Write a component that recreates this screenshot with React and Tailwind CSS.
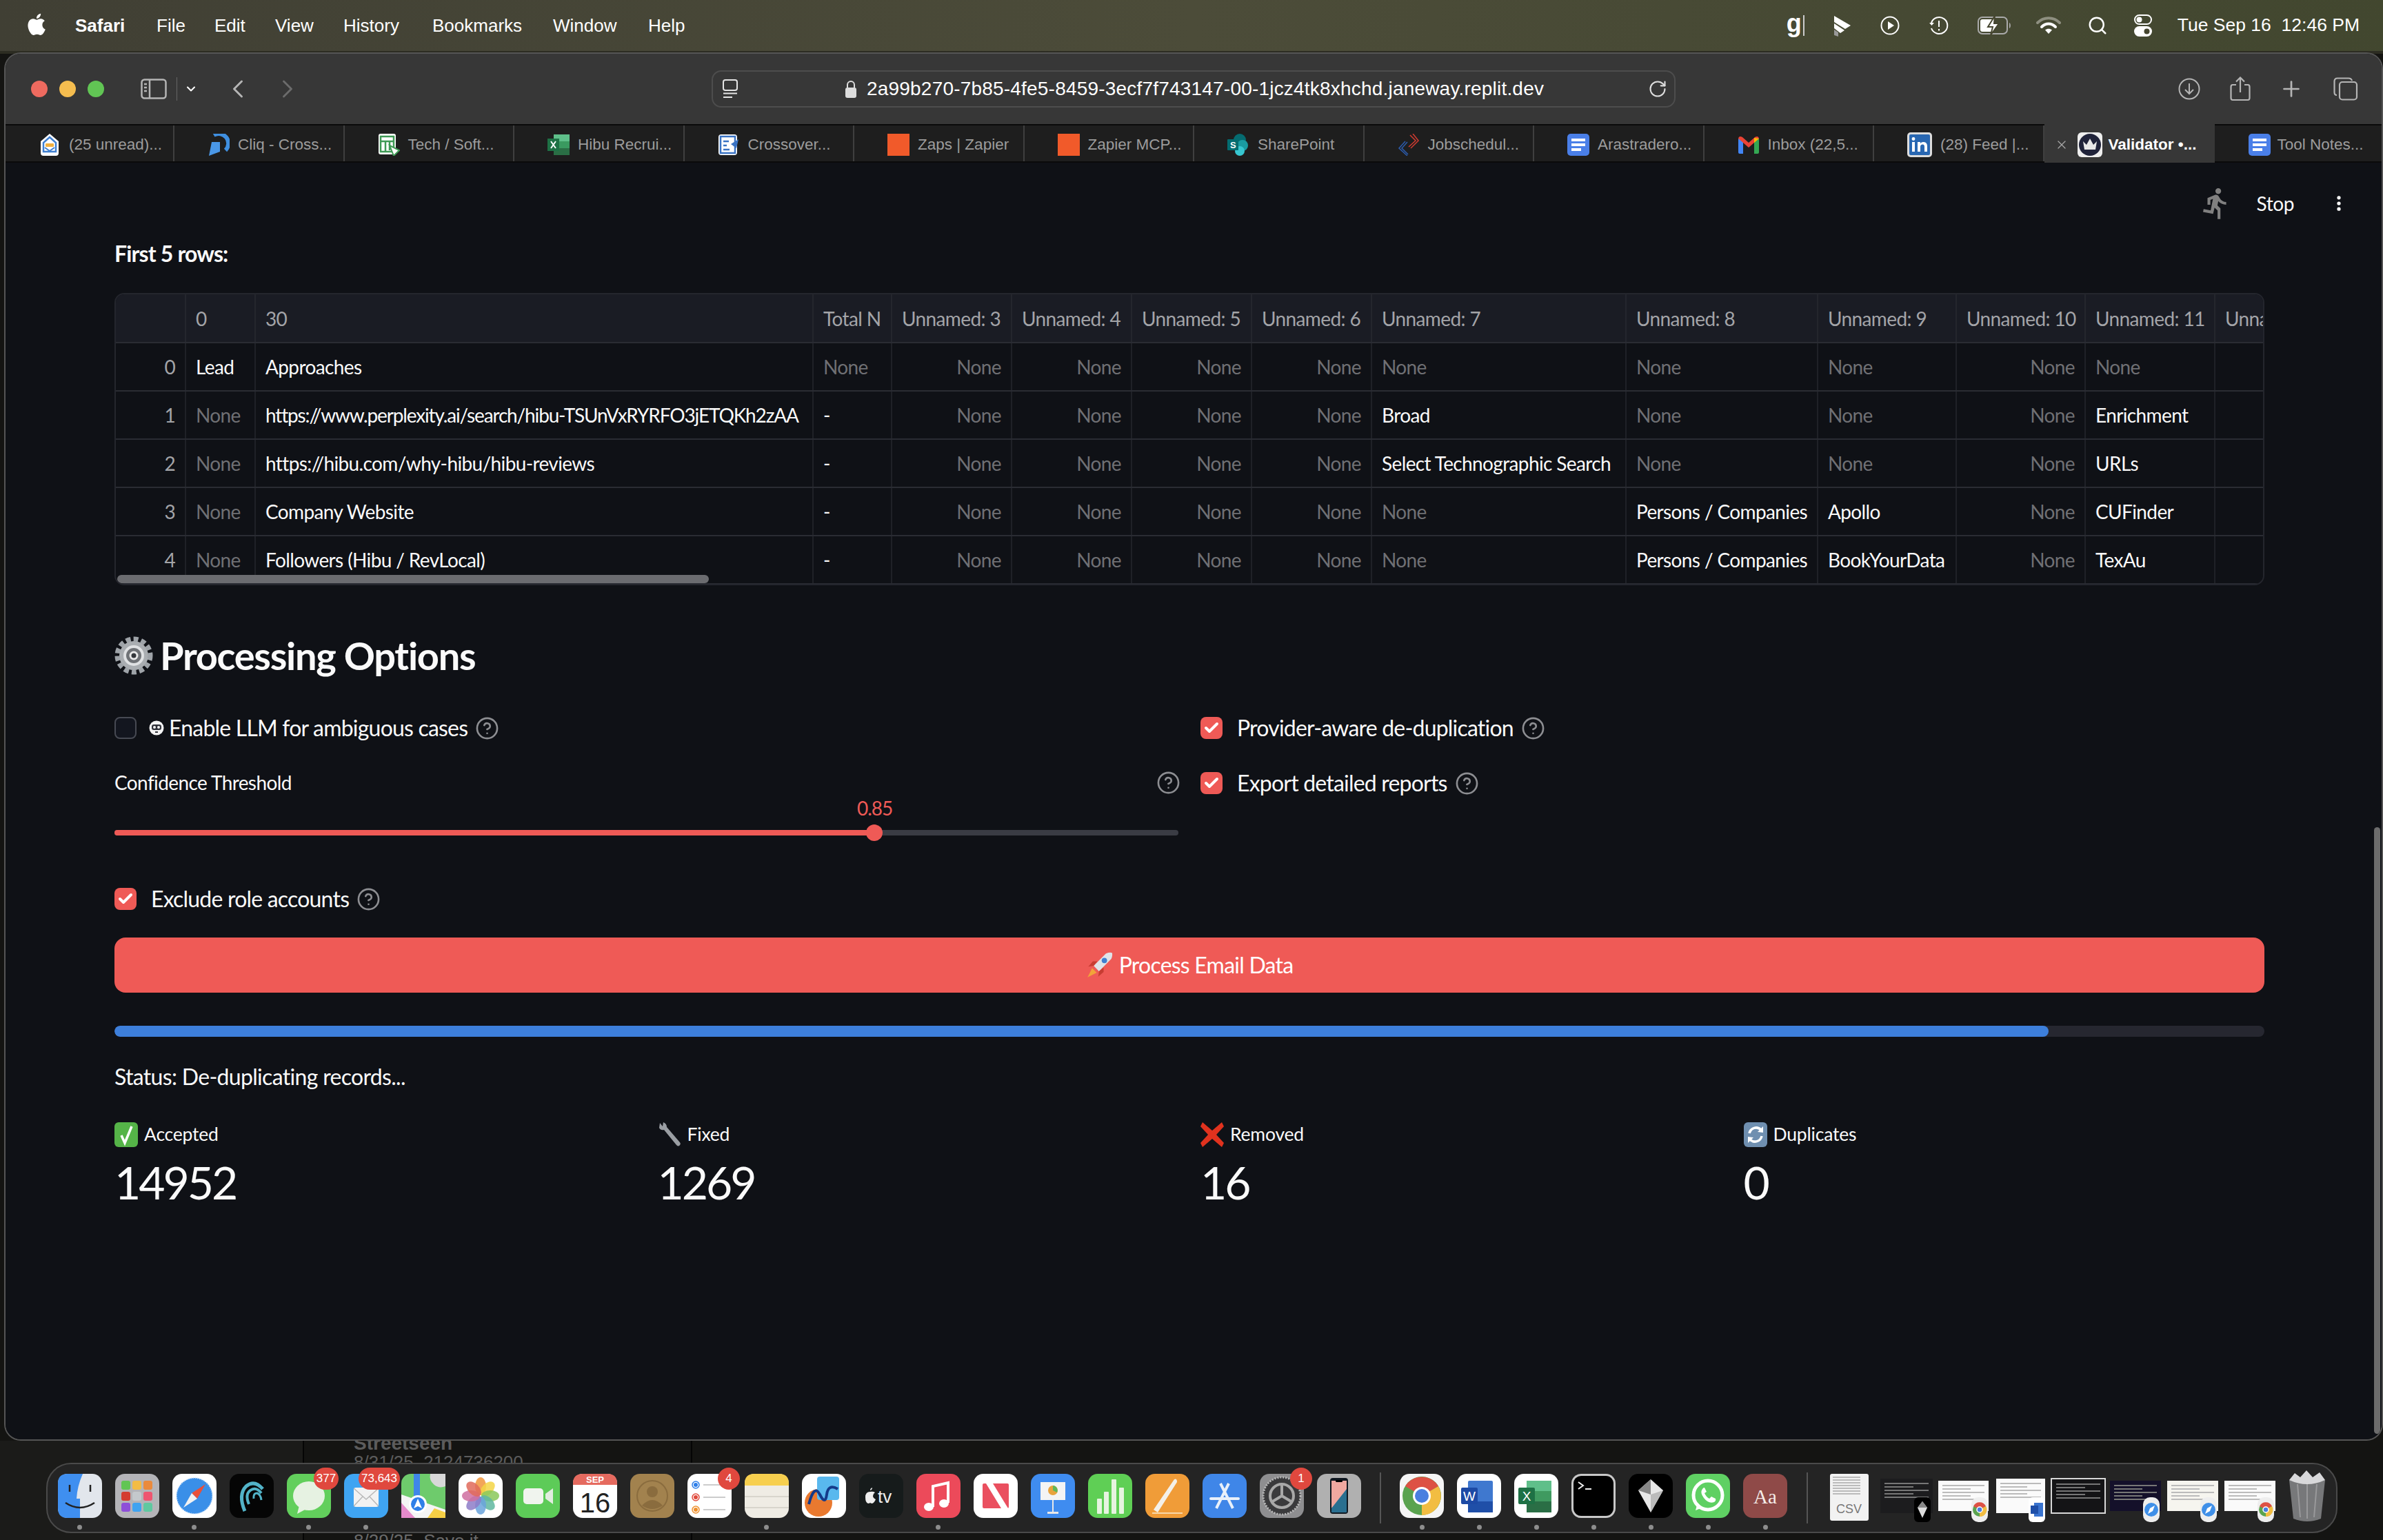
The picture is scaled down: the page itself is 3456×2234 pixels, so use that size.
import React from "react";
import { ChevronDown, ChevronLeft, ChevronRight, CircleHelp, Check, EllipsisVertical, Plus, Search, RotateCw, X } from "lucide-react";
import { MdDirectionsRun } from "react-icons/md";

const ui = "font-['Liberation_Sans',sans-serif]";
const app = "font-['Lato',sans-serif]";

/* ---------- menu bar ---------- */
const menuItems = [
  ["Safari", "w-[118px] font-bold"],
  ["File", "w-[84px]"],
  ["Edit", "w-[88px]"],
  ["View", "w-[99px]"],
  ["History", "w-[129px]"],
  ["Bookmarks", "w-[175px]"],
  ["Window", "w-[138px]"],
  ["Help", "w-[60px]"],
];

function AppleLogo({ className }) {
  return (
    <svg viewBox="0 0 24 24" fill="currentColor" className={className}>
      <path d="M17.6 12.8c0-2.6 2.1-3.8 2.2-3.9-1.2-1.8-3.1-2-3.7-2-1.6-.2-3.1.9-3.9.9s-2.1-.9-3.4-.9c-1.7 0-3.4 1-4.3 2.6-1.8 3.2-.5 7.9 1.3 10.5.9 1.3 1.9 2.7 3.3 2.6 1.3-.1 1.8-.8 3.4-.8s2 .8 3.4.8 2.3-1.3 3.2-2.6c1-1.5 1.4-2.9 1.4-3-.1 0-2.9-1.1-2.9-4.2zM15 5.1c.7-.9 1.2-2.1 1.1-3.3-1 0-2.3.7-3 1.5-.7.8-1.3 2-1.1 3.2 1.1.1 2.3-.6 3-1.4z" />
    </svg>
  );
}

function MenuBar() {
  return (
    <div className={`${ui} flex items-center h-[74px] bg-linear-to-r from-[#403f34] via-[#4c4c39] to-[#42472f] text-white text-[26px] shrink-0`}>
      <AppleLogo className="w-[36px] h-[36px] ml-[35px] mr-[38px] -mt-[4px]" />
      {menuItems.map(([label, cls]) => (
        <span key={label} className={cls}>{label}</span>
      ))}
      <div className="ml-auto flex items-center text-white">
        <span className="font-bold text-[36px] leading-none -mt-[6px]">g</span>
        <span className="w-[2px] h-[30px] bg-[#ccc] ml-[2px]" />
        <svg viewBox="0 0 28 32" className="w-[28px] h-[32px] ml-[41px]">
          <path d="M2 2 L26 16 L18 21 L2 11Z" fill="#fff" />
          <path d="M2 13 L17 23 L11 27 L2 20Z" fill="#fff" />
          <path d="M2 22 L8 26 L8 32 L2 30Z" fill="#999" />
        </svg>
        <svg viewBox="0 0 28 28" className="w-[28px] h-[28px] ml-[41px]">
          <circle cx="14" cy="14" r="12.5" fill="none" stroke="#fff" strokeWidth="2" />
          <path d="M11 8 L20 14 L11 20Z" fill="#fff" />
        </svg>
        <svg viewBox="0 0 28 28" className="w-[28px] h-[28px] ml-[43px]" fill="none" stroke="#fff" strokeWidth="2">
          <path d="M3 10 A12 12 0 1 1 3 18" />
          <path d="M0 10 L3.5 14 L7 10" fill="#fff" stroke="none" />
          <path d="M14 7 V16 M14 19 V21.5" />
        </svg>
        <svg viewBox="0 0 50 30" className="w-[50px] h-[30px] ml-[42px]" fill="none">
          <rect x="1" y="3" width="42" height="24" rx="6" stroke="#aaa" strokeWidth="2" />
          <rect x="4" y="6" width="20" height="18" rx="3" fill="#fff" />
          <path d="M46 11 v8 c2.5-1 2.5-7 0-8z" fill="#aaa" />
          <path d="M25 1 L15 17 H22 L19 29 L31 12 H24Z" fill="#fff" stroke="#45452f" strokeWidth="2" />
        </svg>
        <svg viewBox="0 0 36 28" className="w-[36px] h-[28px] ml-[35px]" fill="none" strokeLinecap="round">
          <path d="M2 10 C11 1 25 1 34 10" stroke="#8e8f80" strokeWidth="4" />
          <path d="M8 16 C14 10 22 10 28 16" stroke="#fff" strokeWidth="4" />
          <path d="M18 26 L13 20.5 C16 18 20 18 23 20.5Z" fill="#fff" />
        </svg>
        <Search className="w-[30px] h-[30px] ml-[38px]" strokeWidth={2} />
        <svg viewBox="0 0 26 32" className="w-[26px] h-[32px] ml-[38px]">
          <rect x="1" y="1" width="24" height="13" rx="6.5" fill="none" stroke="#fff" strokeWidth="2" />
          <circle cx="7.5" cy="7.5" r="4" fill="#fff" />
          <rect x="0" y="17" width="26" height="15" rx="7.5" fill="#fff" />
          <circle cx="18.5" cy="24.5" r="4" fill="#45452f" />
        </svg>
        <span className="ml-[37px] mr-[34px] text-[26.5px] whitespace-nowrap">Tue Sep 16&nbsp;&nbsp;12:46 PM</span>
      </div>
    </div>
  );
}

/* ---------- favicons ---------- */
const fav = "w-[32px] h-[32px] shrink-0";
const favicons = {
  outlook: (
    <svg viewBox="0 0 32 32" className={fav}>
      <path d="M16 0 L29 11 V28 Q29 32 25 32 H7 Q3 32 3 28 V11Z" fill="#fff" />
      <path d="M16 5 L25 13 V26 H7 V13Z" fill="none" stroke="#3f7fd0" strokeWidth="2.5" />
      <rect x="10" y="14" width="12" height="5" rx="1" fill="#f0b040" />
      <path d="M9 20 L16 25 L23 20" fill="none" stroke="#3f7fd0" strokeWidth="2" />
    </svg>
  ),
  cliq: (
    <svg viewBox="0 0 32 32" className={fav}>
      <path d="M9 2 A14 14 0 0 1 26 24" fill="none" stroke="#3f8fe0" strokeWidth="6" />
      <path d="M6 12 H18 V26 L2 32Z" fill="#4a97e6" />
    </svg>
  ),
  sheet: (
    <svg viewBox="0 0 32 32" className={fav}>
      <rect x="1" y="0" width="25" height="30" rx="3" fill="#fff" />
      <path d="M4 4 H23 V26 H4Z M4 11 H23 M11 11 V26 M17 11 V24" fill="none" stroke="#3f9a55" strokeWidth="2.5" />
      <path d="M17 17 L31 24 L23 32Z" fill="#fff" stroke="#3f9a55" strokeWidth="2" />
    </svg>
  ),
  excel: (
    <svg viewBox="0 0 32 32" className={fav}>
      <rect x="9" y="1" width="23" height="10" fill="#5fbf8a" />
      <rect x="9" y="11" width="23" height="10" fill="#3a9a60" />
      <rect x="9" y="21" width="23" height="10" fill="#2a6e45" />
      <rect x="0" y="7" width="17" height="18" fill="#1e7145" />
      <path d="M5 11 L12 21 M12 11 L5 21" stroke="#fff" strokeWidth="2" />
    </svg>
  ),
  form: (
    <svg viewBox="0 0 32 32" className={fav}>
      <rect x="1" y="1" width="27" height="30" rx="4" fill="#fff" />
      <rect x="4" y="4" width="21" height="24" fill="none" stroke="#3a73c4" strokeWidth="2.5" />
      <path d="M8 11 H16 M8 17 H13 M8 23 H17" stroke="#3a73c4" strokeWidth="2.5" />
      <path d="M30 8 L19 15 L27 21Z" fill="#3a73c4" />
    </svg>
  ),
  zapier: <div className={`${fav} bg-[#f15a2a]`} />,
  sharepoint: (
    <svg viewBox="0 0 32 32" className={fav}>
      <circle cx="18" cy="9" r="9" fill="#056b70" />
      <circle cx="22" cy="17" r="8" fill="#1a9ba1" />
      <circle cx="18" cy="25" r="7" fill="#37c6d0" />
      <rect x="0" y="8" width="16" height="16" rx="1" fill="#036c70" />
      <text x="4" y="21" fontSize="13" fontWeight="700" fill="#fff" fontFamily="Liberation Sans">S</text>
    </svg>
  ),
  job: (
    <svg viewBox="0 0 32 32" className={fav} fill="none" strokeWidth="1.6">
      <path d="M18 2 L26 10 L16 19 M22 0 L30 10 L19 21" stroke="#c93a30" />
      <path d="M14 12 L6 21 L15 30 M11 11 L2 21 L14 32" stroke="#2c5aa8" />
    </svg>
  ),
  docs: (
    <svg viewBox="0 0 32 32" className={fav}>
      <rect x="0" y="0" width="32" height="32" rx="5" fill="#4a7fe8" />
      <rect x="6" y="7" width="20" height="4" fill="#fff" />
      <rect x="6" y="14" width="20" height="4" fill="#fff" />
      <rect x="6" y="21" width="14" height="4" fill="#fff" />
    </svg>
  ),
  gmail: (
    <svg viewBox="0 0 32 32" className={fav}>
      <path d="M1 7 L8 11 V29 H3 Q1 29 1 27Z" fill="#4285f4" />
      <path d="M31 7 L24 11 V29 H29 Q31 29 31 27Z" fill="#34a853" />
      <path d="M1 7 Q2 2 7 5 L16 13 L25 5 Q30 2 31 7 L24 13 L16 20 L8 13Z" fill="#ea4335" />
      <path d="M24 6 L31 7 L24 13Z" fill="#fbbc04" />
    </svg>
  ),
  linkedin: (
    <svg viewBox="0 0 36 36" className="w-[36px] h-[36px] shrink-0">
      <rect x="0" y="0" width="36" height="36" rx="5" fill="#ddd" />
      <rect x="3" y="3" width="30" height="30" rx="2" fill="#2867b2" />
      <rect x="7" y="14" width="4" height="14" fill="#fff" />
      <circle cx="9" cy="9.5" r="2.4" fill="#fff" />
      <path d="M15 14 H19 V16 Q21 13.5 24 14 Q29 14.5 29 20 V28 H25 V21 Q25 17.5 22.5 17.5 Q19 17.5 19 21 V28 H15Z" fill="#fff" />
    </svg>
  ),
  crown: (
    <svg viewBox="0 0 36 36" className="w-[36px] h-[36px] shrink-0">
      <rect x="0" y="0" width="36" height="36" rx="6" fill="#eee" />
      <circle cx="18" cy="18" r="16" fill="#20233a" />
      <path d="M8 13 L13 18 L18 9 L23 18 L28 13 L26 25 H10Z" fill="#e8e8e8" />
    </svg>
  ),
};

const tabs = [
  ["outlook", "(25 unread)..."],
  ["cliq", "Cliq - Cross..."],
  ["sheet", "Tech / Soft..."],
  ["excel", "Hibu Recrui..."],
  ["form", "Crossover..."],
  ["zapier", "Zaps | Zapier"],
  ["zapier", "Zapier MCP..."],
  ["sharepoint", "SharePoint"],
  ["job", "Jobschedul..."],
  ["docs", "Arastradero..."],
  ["gmail", "Inbox (22,5..."],
  ["linkedin", "(28) Feed |..."],
];

function TabBar() {
  return (
    <div className={`${ui} flex h-[56px] bg-[#1e1e1e] border-y-2 border-[#0a0a0a] text-[22.5px] text-[#9c9c9c] shrink-0`}>
      {tabs.map(([icon, label], i) => (
        <div
          key={label}
          className={`flex items-center ${i === 0 ? "w-[245px]" : "w-[246.5px]"} pl-[48px] pt-[3px] gap-[12px] border-r-2 border-[#3f3f3f] whitespace-nowrap overflow-hidden`}
        >
          {favicons[icon]}
          <span>{label}</span>
        </div>
      ))}
      <div className="flex items-center w-[247px] -my-[2px] bg-[#373737] pl-[15px] pt-[3px] text-white whitespace-nowrap">
        <X className="w-[20px] h-[20px] text-[#a8a8a8] mr-[13px]" strokeWidth={1.5} />
        {favicons.crown}
        <span className="ml-[9px] font-bold">Validator •...</span>
      </div>
      <div className="flex items-center flex-1 pl-[49px] pt-[3px] gap-[10px] whitespace-nowrap">
        {favicons.docs}
        <span>Tool Notes...</span>
      </div>
    </div>
  );
}

function Toolbar() {
  return (
    <div className={`${ui} flex items-center h-[102px] bg-[#373737] shrink-0 pl-[37px] text-[#b5b5b5]`}>
      <span className="w-[24px] h-[24px] rounded-full bg-[#ee6a5f]" />
      <span className="w-[24px] h-[24px] rounded-full bg-[#f5bd4f] ml-[17px]" />
      <span className="w-[24px] h-[24px] rounded-full bg-[#61c554] ml-[17px]" />
      <svg viewBox="0 0 38 30" className="w-[38px] h-[30px] ml-[53px]" fill="none" stroke="#b5b5b5" strokeWidth="2.5">
        <rect x="1.5" y="1.5" width="35" height="27" rx="4" />
        <path d="M13 2 V28 M5 8 H9 M5 13 H9 M5 18 H9" />
      </svg>
      <span className="w-[1px] h-[34px] bg-[#666] ml-[14px]" />
      <ChevronDown className="w-[20px] h-[20px] ml-[10px] text-white" strokeWidth={2.5} />
      <ChevronLeft className="w-[44px] h-[44px] ml-[36px]" strokeWidth={1.6} />
      <ChevronRight className="w-[44px] h-[44px] ml-[28px] text-[#6b6b6b]" strokeWidth={1.6} />
      <div className="flex items-center w-[1398px] h-[54px] ml-[593px] rounded-[14px] border-2 border-[#4d4d4d] relative">
        <svg viewBox="0 0 22 28" className="w-[22px] h-[28px] ml-[14px]" fill="none" stroke="#e5e5e5" strokeWidth="2">
          <rect x="1" y="1" width="20" height="15" rx="3" />
          <path d="M1 20.5 H21 M1 26 H14" />
        </svg>
        <svg viewBox="0 0 18 26" className="w-[18px] h-[26px] ml-[155px]">
          <path d="M4 11 V7 A5 5 0 0 1 14 7 V11" fill="none" stroke="#ddd" strokeWidth="2" />
          <rect x="1" y="11" width="16" height="15" rx="3" fill="#ddd" />
        </svg>
        <span className="ml-[14px] text-[28px] tracking-[0.2px] text-white whitespace-nowrap">2a99b270-7b85-4fe5-8459-3ecf7f743147-00-1jcz4tk8xhchd.janeway.replit.dev</span>
        <RotateCw className="w-[28px] h-[28px] absolute right-[10px] text-[#ddd]" strokeWidth={1.8} />
      </div>
      <div className="ml-auto flex items-center pr-[34px]">
        <svg viewBox="0 0 32 32" className="w-[32px] h-[32px]" fill="none" stroke="#b5b5b5" strokeWidth="2">
          <circle cx="16" cy="16" r="14.5" />
          <path d="M16 8 V23 M10 17 L16 23 L22 17" />
        </svg>
        <svg viewBox="0 0 30 36" className="w-[30px] h-[36px] ml-[43px]" fill="none" stroke="#b5b5b5" strokeWidth="2.2">
          <path d="M9 12 H4 Q1.5 12 1.5 15 V31 Q1.5 34 4 34 H26 Q28.5 34 28.5 31 V15 Q28.5 12 26 12 H21" />
          <path d="M15 23 V1.5 M9 7.5 L15 1.5 L21 7.5" />
        </svg>
        <Plus className="w-[36px] h-[36px] ml-[41px]" strokeWidth={1.8} />
        <svg viewBox="0 0 36 34" className="w-[36px] h-[34px] ml-[43px]" fill="none" stroke="#b5b5b5" strokeWidth="2.2">
          <rect x="9" y="7" width="25" height="25.5" rx="4" />
          <path d="M5 26 Q1.5 26 1.5 22 V6 Q1.5 1.5 6 1.5 H22 Q26 1.5 27 5" />
        </svg>
      </div>
    </div>
  );
}

/* ---------- data table ---------- */
const colWidths = ["w-[101px]", "w-[101px]", "w-[809px]", "w-[114px]", "w-[174px]", "w-[174px]", "w-[174px]", "w-[174px]", "w-[369px]", "w-[278px]", "w-[201px]", "w-[187px]", "w-[188px]", "w-[174px]"];
const headers = ["", "0", "30", "Total N", "Unnamed: 3", "Unnamed: 4", "Unnamed: 5", "Unnamed: 6", "Unnamed: 7", "Unnamed: 8", "Unnamed: 9", "Unnamed: 10", "Unnamed: 11", "Unnamed: 12"];
const rightCols = [0, 4, 5, 6, 7, 11];
const N = "None";
const rows = [
  ["0", "Lead", "Approaches", N, N, N, N, N, N, N, N, N, N, ""],
  ["1", N, "https://www.perplexity.ai/search/hibu-TSUnVxRYRFO3jETQKh2zAA", "-", N, N, N, N, "Broad", N, N, N, "Enrichment", ""],
  ["2", N, "https://hibu.com/why-hibu/hibu-reviews", "-", N, N, N, N, "Select Technographic Search", N, N, N, "URLs", ""],
  ["3", N, "Company Website", "-", N, N, N, N, N, "Persons / Companies", "Apollo", N, "CUFinder", ""],
  ["4", N, "Followers (Hibu / RevLocal)", "-", N, N, N, N, N, "Persons / Companies", "BookYourData", N, "TexAu", ""],
];

function DataTable() {
  return (
    <div className="relative mt-[35px] h-[424px] rounded-[14px] border-2 border-[#24262d] overflow-hidden">
      <table className="table-fixed border-collapse w-[3218px] text-[28px] tracking-[-0.62px]">
        <colgroup>
          {colWidths.map((w, i) => <col key={i} className={w} />)}
        </colgroup>
        <thead>
          <tr className="h-[70px] bg-[#1a1c24] text-[#a3a4a8]">
            {headers.map((h, i) => (
              <th key={i} className="font-normal text-left px-[14px] whitespace-nowrap overflow-hidden border-r-2 border-b-2 border-r-[#24262d] border-b-[#2a2c33]">{h}</th>
            ))}
          </tr>
        </thead>
        <tbody>
          {rows.map((row) => (
            <tr key={row[0]} className="h-[70px]">
              {row.map((cell, i) => (
                <td
                  key={i}
                  className={`px-[14px] whitespace-nowrap overflow-hidden border-r-2 border-b-2 border-r-[#1f2127] border-b-[#2a2c33] ${rightCols.includes(i) ? "text-right" : "text-left"} ${i === 0 ? "text-[#a3a4a8]" : cell === N ? "text-[#6f7074]" : "text-[#fafafa]"} ${cell.length > 50 ? "tracking-[-1.15px]" : ""}`}
                >
                  {cell}
                </td>
              ))}
            </tr>
          ))}
        </tbody>
      </table>
      <div className="absolute left-[2px] bottom-[1px] w-[858px] h-[12px] rounded-full bg-[#6b6c70]" />
    </div>
  );
}

/* ---------- small form bits ---------- */
function Help({ className = "" }) {
  return <CircleHelp className={`w-[35px] h-[35px] text-[#8d8e92] shrink-0 ${className}`} strokeWidth={1.8} />;
}

function CheckBox({ on }) {
  return (
    <span className={`flex items-center justify-center w-[32px] h-[32px] rounded-[8px] shrink-0 ${on ? "bg-[#ef5a56]" : "bg-[#13161f] border-2 border-[#474a53]"}`}>
      {on && <Check className="w-[24px] h-[24px] text-white" strokeWidth={4} />}
    </span>
  );
}

function GearEmoji() {
  return (
    <svg viewBox="0 0 56 56" className="w-[56px] h-[56px] shrink-0">
      <circle cx="28" cy="28" r="24" fill="none" stroke="#9ea3a8" strokeWidth="7" strokeDasharray="7 4.2" />
      <circle cx="28" cy="28" r="21" fill="#a9adb1" />
      <circle cx="28" cy="28" r="15" fill="#dfe1e3" />
      <circle cx="28" cy="28" r="11" fill="#6f7276" />
      <circle cx="28" cy="28" r="6.5" fill="#e8e8e8" />
      <circle cx="28" cy="28" r="3.5" fill="#33363a" />
    </svg>
  );
}

function RobotEmoji() {
  return (
    <svg viewBox="0 0 22 22" className="w-[22px] h-[22px] shrink-0 mr-[7px]">
      <circle cx="11" cy="11" r="10.5" fill="#f4f4f4" />
      <rect x="4" y="6" width="14" height="8" rx="3" fill="#30323a" />
      <circle cx="8" cy="10" r="2" fill="#f4f4f4" />
      <circle cx="14" cy="10" r="2" fill="#f4f4f4" />
      <rect x="9" y="16" width="4" height="2" fill="#30323a" />
    </svg>
  );
}

function CheckRow({ on, label, emoji, tight, className = "" }) {
  return (
    <div className={`flex items-center h-[32px] text-[32px] tracking-[-0.8px] text-[#fafafa] ${className}`}>
      <CheckBox on={on} />
      <span className={tight ? "w-[18px]" : "w-[21px]"} />
      {emoji}
      <span className="whitespace-nowrap">{label}</span>
      <Help className="ml-[11px]" />
    </div>
  );
}

function Slider() {
  return (
    <div className="relative h-[70px]">
      <span className="absolute left-[1077px] top-[0px] text-[28px] tracking-[-1px] leading-[34px] text-[#ef5a56]">0.85</span>
      <div className="absolute top-[49px] left-0 right-0 h-[8px] rounded-full bg-[#3a3c44]">
        <div className="h-full w-[1102px] rounded-l-full bg-[#ef5a56]" />
      </div>
      <div className="absolute top-[41px] left-[1090px] w-[24px] h-[24px] rounded-full bg-[#ef5a56]" />
    </div>
  );
}

/* ---------- metric emoji ---------- */
const metricIcon = "w-[34px] h-[36px] shrink-0";
const metrics = [
  {
    label: "Accepted",
    value: "14952",
    icon: (
      <svg viewBox="0 0 34 36" className={metricIcon}>
        <rect x="0" y="0" width="34" height="36" rx="6" fill="#55b448" />
        <path d="M10 19 L15 30 L25 6" fill="none" stroke="#fff" strokeWidth="3.5" />
      </svg>
    ),
  },
  {
    label: "Fixed",
    value: "1269",
    icon: (
      <svg viewBox="0 0 34 36" className={metricIcon}>
        <path d="M3 1 L2 8 Q4 12 9 11 L27 33 Q30 36 32 33 Q34 31 31 28 L13 7 Q13 2 8 0 L7 6 Z" fill="#9a9ea3" />
      </svg>
    ),
  },
  {
    label: "Removed",
    value: "16",
    icon: (
      <svg viewBox="0 0 34 36" className={metricIcon}>
        <path d="M3 0 L17 12 L31 0 L34 6 L23 18 L34 30 L31 36 L17 24 L3 36 L0 30 L11 18 L0 6Z" fill="#e0321e" />
      </svg>
    ),
  },
  {
    label: "Duplicates",
    value: "0",
    icon: (
      <svg viewBox="0 0 34 36" className={metricIcon}>
        <rect x="0" y="0" width="34" height="36" rx="6" fill="#6f8fb0" />
        <path d="M8 16 A10 10 0 0 1 25 11" fill="none" stroke="#fff" strokeWidth="3.5" />
        <path d="M28 6 L28 15 L20 14Z" fill="#fff" />
        <path d="M26 20 A10 10 0 0 1 9 25" fill="none" stroke="#fff" strokeWidth="3.5" />
        <path d="M6 30 L6 21 L14 22Z" fill="#fff" />
      </svg>
    ),
  },
];

function RocketEmoji() {
  return (
    <svg viewBox="0 0 36 36" className="w-[40px] h-[40px] shrink-0 mr-[8px]">
      <path d="M2 34 L8 22 L14 28Z" fill="#f2a33a" />
      <path d="M10 19 L26 3 Q31 1 34 2 Q35 5 33 10 L17 26Z" fill="#dfe3e8" />
      <circle cx="24" cy="12" r="3.5" fill="#3f7fd0" />
      <path d="M10 19 L3 20 L9 13 L15 13Z M17 26 L16 33 L23 27 L23 21Z" fill="#c73c32" />
    </svg>
  );
}

/* ---------- dock ---------- */
const tile = "w-[64px] h-[64px]";

function Svg({ children, bg = "#fff" }) {
  return (
    <svg viewBox="0 0 64 64" className={tile}>
      <rect width="64" height="64" rx="14" fill={bg} />
      {children}
    </svg>
  );
}

function Petals() {
  const colors = ["#f0953c", "#f3d545", "#8ac85a", "#5fb7a0", "#6aa3dc", "#8d7cc8", "#cf6ea0", "#e06a5a"];
  return colors.map((c, i) => (
    <ellipse key={c} cx="32" cy="18" rx="8" ry="13" fill={c} opacity="0.85" transform={`rotate(${i * 45} 32 32)`} />
  ));
}

function ChromeMark() {
  return (
    <g>
      <circle cx="32" cy="32" r="28" fill="#5aa34f" />
      <path d="M32 32 L8 18 A28 28 0 0 1 56 18Z" fill="#dd5144" />
      <path d="M32 32 L56 18 A28 28 0 0 1 32 60Z" fill="#f2bd42" />
      <circle cx="32" cy="32" r="13" fill="#fff" />
      <circle cx="32" cy="32" r="10" fill="#4a7fe0" />
    </g>
  );
}

function Thumb({ bg, w, h, badge, dark, children }) {
  return (
    <div className="relative flex items-center justify-center w-[83px] h-[64px] shrink-0">
      <div className={`${w} ${h} ${bg} overflow-hidden flex flex-col gap-[3px] p-[6px]`}>
        {children || [0, 1, 2, 3, 4].map((i) => (
          <span key={i} className={`block h-[2px] ${dark ? "bg-[#777]" : "bg-[#bbb]"} ${i % 2 ? "w-2/3" : "w-full"}`} />
        ))}
      </div>
      {badge && <div className="absolute right-[6px] -bottom-[6px] w-[24px] h-[52px] flex items-end">{badge}</div>}
    </div>
  );
}

const miniChrome = (
  <svg viewBox="0 0 24 36" className="w-[24px] h-[36px]">
    <rect width="24" height="36" rx="10" fill="#eee" />
    <circle cx="12" cy="18" r="10" fill="#5aa34f" />
    <path d="M12 18 L3 13 A10 10 0 0 1 21 13Z" fill="#dd5144" />
    <path d="M12 18 L21 13 A10 10 0 0 1 12 28Z" fill="#f2bd42" />
    <circle cx="12" cy="18" r="4" fill="#4a7fe0" stroke="#fff" strokeWidth="1.5" />
  </svg>
);
const miniSafari = (
  <svg viewBox="0 0 24 36" className="w-[24px] h-[36px]">
    <rect width="24" height="36" rx="10" fill="#eee" />
    <circle cx="12" cy="18" r="10" fill="#3f8fe8" />
    <path d="M17 12 L10 16 L7 24 L14 20Z" fill="#fff" />
  </svg>
);
const miniWord = (
  <svg viewBox="0 0 24 36" className="w-[24px] h-[36px]">
    <rect width="24" height="36" rx="6" fill="#fff" />
    <rect x="8" y="8" width="13" height="20" fill="#3a74d0" />
    <rect x="3" y="12" width="11" height="12" fill="#1f4fa8" />
  </svg>
);
const miniPrism = (
  <svg viewBox="0 0 24 36" className="w-[24px] h-[36px]">
    <rect width="24" height="36" rx="6" fill="#000" />
    <path d="M12 6 L19 15 L12 30 L5 15Z" fill="#ddd" />
    <path d="M12 6 L19 15 L5 15Z" fill="#888" />
  </svg>
);

const dockLeft = [
  { dot: true, el: (
    <Svg bg="#e2e6ec">
      <path d="M14 0 H36 Q28 18 27 36 H32 V64 H14 Q0 64 0 50 V14 Q0 0 14 0Z" fill="#3f8ff0" />
      <path d="M17 16 V26 M47 16 V26" stroke="#222" strokeWidth="2.5" />
      <path d="M11 42 Q32 56 53 42" fill="none" stroke="#222" strokeWidth="2.5" />
    </Svg>
  ) },
  { el: (
    <Svg bg="#b4b4b8">
      {[["#62c554", 9, 10], ["#f3bc45", 25, 10], ["#ea8a3c", 41, 10], ["#d43c30", 9, 26], ["#c4c8cc", 25, 26], ["#ee5570", 41, 26], ["#8e4fd8", 9, 42], ["#3fa3f0", 25, 42], ["#5fc8a0", 41, 42]].map(([c, x, y]) => (
        <rect key={c} x={x} y={y} width="13" height="13" rx="3" fill={c} />
      ))}
    </Svg>
  ) },
  { dot: true, el: (
    <Svg>
      <circle cx="32" cy="32" r="26" fill="#3a8fe8" />
      <circle cx="32" cy="32" r="26" fill="none" stroke="#cfe3f8" strokeWidth="2" strokeDasharray="1 2" />
      <path d="M48 15 L28 28 L36 36Z" fill="#e8503a" />
      <path d="M16 49 L36 36 L28 28Z" fill="#f2f2f2" />
    </Svg>
  ) },
  { el: (
    <Svg bg="#050505">
      <path d="M22 54 Q12 30 24 18 Q36 8 48 22" fill="none" stroke="#52b3c8" strokeWidth="5" />
      <path d="M28 44 Q22 30 30 24 Q38 18 46 28" fill="none" stroke="#52b3c8" strokeWidth="4" />
      <path d="M35 36 Q34 28 40 28 Q45 30 46 38" fill="none" stroke="#52b3c8" strokeWidth="3" />
    </Svg>
  ) },
  { dot: true, badge: "377", badgeCls: "w-[36px] -right-[2px]", el: (
    <Svg bg="#62cf5c">
      <ellipse cx="32" cy="32" rx="23" ry="21" fill="#e6f2e2" />
      <path d="M18 46 L15 58 L30 50Z" fill="#e6f2e2" />
    </Svg>
  ) },
  { dot: true, badge: "73,643", badgeCls: "w-[60px] -right-[8px]", el: (
    <Svg bg="#3fa4f2">
      <rect x="14" y="20" width="36" height="28" rx="3" fill="#f2f2f2" />
      <path d="M14 21 L32 37 L50 21 M14 47 L27 33 M50 47 L37 33" fill="none" stroke="#b8b8b8" strokeWidth="1.5" />
    </Svg>
  ) },
  { el: (
    <Svg bg="#6ecb6c">
      <path d="M0 30 L64 52 V64 H0Z" fill="#f4f4f4" />
      <path d="M0 42 L20 64 H0Z" fill="#e58acb" />
      <path d="M38 64 L48 50 L64 56 V64Z" fill="#f5cf45" />
      <rect x="18" y="0" width="9" height="40" fill="#3f86e8" />
      <circle cx="24" cy="44" r="13" fill="#fff" />
      <circle cx="24" cy="44" r="10" fill="#2f7fe8" />
      <path d="M24 36 L30 50 L24 47 L18 50Z" fill="#fff" />
      <path d="M42 0 A16 16 0 0 0 64 18 V0Z" fill="#d8d8d8" />
    </Svg>
  ) },
  { el: <Svg><Petals /></Svg> },
  { el: (
    <Svg bg="#5dcb58">
      <rect x="11" y="21" width="29" height="23" rx="5" fill="#f0f4ee" />
      <path d="M43 29 L54 21 V44 L43 36Z" fill="#e2ece0" />
    </Svg>
  ) },
  { el: (
    <Svg>
      <path d="M0 14 Q0 0 14 0 H50 Q64 0 64 14 V16 H0Z" fill="#e56a5f" />
      <text x="32" y="13" fontSize="13" textAnchor="middle" fill="#fff" fontWeight="700" fontFamily="Liberation Sans">SEP</text>
      <text x="32" y="56" fontSize="40" textAnchor="middle" fill="#222" fontFamily="Liberation Sans">16</text>
    </Svg>
  ) },
  { el: (
    <Svg bg="#a2824e">
      <circle cx="32" cy="32" r="22" fill="none" stroke="#8a6c3e" strokeWidth="2" />
      <circle cx="32" cy="26" r="8" fill="#8a6c3e" />
      <path d="M17 46 Q32 30 47 46 Q32 56 17 46Z" fill="#8a6c3e" />
    </Svg>
  ) },
  { badge: "4", badgeCls: "w-[32px] -right-[3px]", el: (
    <Svg>
      {[["#2f7fe8", 16], ["#e04a3c", 34], ["#ee8f2c", 52]].map(([c, y]) => (
        <g key={c}>
          <circle cx="12" cy={y} r="5" fill="none" stroke={c} strokeWidth="1.5" />
          <circle cx="12" cy={y} r="3" fill={c} />
          <rect x="23" y={y - 1} width="32" height="2" fill="#ccc" />
        </g>
      ))}
    </Svg>
  ) },
  { dot: true, el: (
    <Svg bg="#efece4">
      <path d="M0 14 Q0 0 14 0 H50 Q64 0 64 14 V17 H0Z" fill="#f7cf4e" />
      <path d="M0 33 H64 M0 49 H64" stroke="#d8d5cc" strokeWidth="2" />
    </Svg>
  ) },
  { el: (
    <Svg>
      <circle cx="24" cy="42" r="20" fill="#e9792f" />
      <rect x="22" y="4" width="32" height="34" rx="4" fill="#59b8ee" />
      <path d="M10 44 Q18 14 26 30 T36 30 T52 22" fill="none" stroke="#143a8a" strokeWidth="4" />
    </Svg>
  ) },
  { el: (
    <Svg bg="#161b1b">
      <text x="27" y="42" fontSize="26" fill="#eee" fontFamily="Liberation Sans">tv</text>
      <path d="M16 26 Q9 26 9 34 Q9 42 13 43 Q15 43 16 42 Q17 43 19 43 Q22 42 24 37 Q20 35 20 32 Q20 29 23 27 Q20 25 16 26Z M16 24 Q16 21 19 20 Q19 23 16 24Z" fill="#eee" />
    </Svg>
  ) },
  { dot: true, el: (
    <Svg bg="#ec4a5a">
      <path d="M24 48 V18 L46 13 V42" fill="none" stroke="#fff" strokeWidth="4" />
      <ellipse cx="18" cy="48" rx="7" ry="6" fill="#fff" />
      <ellipse cx="40" cy="43" rx="7" ry="6" fill="#fff" />
    </Svg>
  ) },
  { el: (
    <Svg>
      <rect x="13" y="14" width="38" height="36" rx="2" fill="#ea4f5f" />
      <path d="M18 14 L40 50 H50 L28 14Z" fill="#fff" />
    </Svg>
  ) },
  { el: (
    <Svg bg="#3f8cf0">
      <rect x="14" y="12" width="36" height="26" fill="#f4f4f4" />
      <circle cx="32" cy="24" r="7" fill="#e8a33c" />
      <path d="M32 24 V17 A7 7 0 0 1 38 27Z" fill="#5fb85a" />
      <rect x="31" y="38" width="2" height="18" fill="#e8e8e8" />
      <rect x="24" y="55" width="16" height="3" fill="#e8e8e8" />
    </Svg>
  ) },
  { el: (
    <Svg bg="#5fcf55">
      {[[13, 36], [23, 26], [34, 8], [45, 20]].map(([x, y]) => (
        <rect key={x} x={x} y={y} width="7" height={58 - y} rx="1" fill="#e6f4e0" />
      ))}
    </Svg>
  ) },
  { el: (
    <Svg bg="#f09c38">
      <path d="M12 52 L42 8 Q46 6 46 12 L18 56Z" fill="#f4f0e8" />
      <rect x="10" y="56" width="44" height="2" fill="#f8d8a8" />
    </Svg>
  ) },
  { el: (
    <Svg bg="#3f86e8">
      <path d="M26 14 L44 50 M38 14 L20 50" stroke="#e8f0fa" strokeWidth="4" />
      <rect x="10" y="34" width="44" height="4" rx="2" fill="#e8f0fa" />
    </Svg>
  ) },
  { badge: "1", badgeCls: "w-[32px] -right-[3px]", el: (
    <Svg bg="#8e8e90">
      <circle cx="32" cy="32" r="27" fill="#3a3a3c" stroke="#b8b8b8" strokeWidth="3" strokeDasharray="2 2" />
      <circle cx="32" cy="32" r="17" fill="none" stroke="#a8a8a8" strokeWidth="4" />
      <path d="M32 32 V15 M32 32 L17 41 M32 32 L47 41" stroke="#a8a8a8" strokeWidth="4" />
    </Svg>
  ) },
  { el: (
    <Svg bg="#b0b0b0">
      <rect x="19" y="6" width="26" height="52" rx="4" fill="#101820" />
      <path d="M21 10 H43 V30 L21 50Z" fill="#f0a8a0" />
      <path d="M21 50 L43 22 V56 H21Z" fill="#2a6f90" />
      <rect x="27" y="9" width="10" height="3" rx="1.5" fill="#000" />
    </Svg>
  ) },
];

const dockRight = [
  { dot: true, el: <Svg bg="#f5f5f5"><ChromeMark /></Svg> },
  { dot: true, el: (
    <Svg>
      <rect x="16" y="10" width="36" height="46" rx="2" fill="#3f78cf" />
      <rect x="16" y="40" width="36" height="16" fill="#1f4fa8" />
      <rect x="6" y="20" width="24" height="24" rx="2" fill="#1d4aa5" />
      <text x="18" y="39" fontSize="19" textAnchor="middle" fill="#fff" fontFamily="Liberation Sans">W</text>
    </Svg>
  ) },
  { dot: true, el: (
    <Svg>
      <rect x="18" y="10" width="36" height="15" fill="#5fbf8a" />
      <rect x="18" y="25" width="36" height="15" fill="#3f9a60" />
      <rect x="18" y="40" width="36" height="16" fill="#2a6e45" />
      <rect x="6" y="20" width="24" height="24" rx="2" fill="#1e7145" />
      <text x="18" y="39" fontSize="19" textAnchor="middle" fill="#fff" fontFamily="Liberation Sans">X</text>
    </Svg>
  ) },
  { dot: true, el: (
    <Svg bg="#c8c8c8">
      <rect x="3" y="3" width="58" height="58" rx="11" fill="#000" />
      <path d="M10 12 L17 17 L10 22" fill="none" stroke="#eee" strokeWidth="2" />
      <rect x="20" y="21" width="9" height="2" fill="#eee" />
    </Svg>
  ) },
  { dot: true, el: (
    <Svg bg="#000">
      <path d="M32 8 L50 24 L32 56 L14 24Z" fill="#e8e8e8" />
      <path d="M32 8 L14 24 L32 30Z" fill="#888" />
      <path d="M32 30 L50 24 L32 56Z" fill="#bbb" />
    </Svg>
  ) },
  { dot: true, el: (
    <Svg bg="#5fd063">
      <circle cx="32" cy="31" r="21" fill="none" stroke="#fff" strokeWidth="5" />
      <path d="M14 53 L17 42 L24 49Z" fill="#fff" />
      <path d="M24 22 Q20 27 26 35 Q33 44 41 41 Q44 39 43 36 L37 33 L34 36 Q29 33 27 28 L30 26 L27 20 Q25 20 24 22Z" fill="#fff" />
    </Svg>
  ) },
  { dot: true, el: (
    <Svg bg="#8f4a48">
      <text x="32" y="43" fontSize="29" textAnchor="middle" fill="#f4ece8" fontFamily="Liberation Serif">Aa</text>
    </Svg>
  ) },
];

function DockSlot({ item }) {
  return (
    <div className="relative flex justify-center w-[83px] shrink-0">
      {item.el}
      {item.badge && (
        <span className={`absolute -top-[9px] ${item.badgeCls} h-[32px] flex items-center justify-center rounded-full bg-[#e0483e] text-white text-[17px]`}>
          {item.badge}
        </span>
      )}
      {item.dot && <span className="absolute -bottom-[17px] w-[7px] h-[7px] rounded-full bg-[#8d8d8d]" />}
    </div>
  );
}

function Dock() {
  return (
    <div className={`${ui} relative flex items-center ml-[67px] mt-[34px] w-[3323px] h-[102px] pl-[5px] pb-[6px] rounded-[36px] border-2 border-[#4a4a4a] bg-[#242424] shrink-0`}>
      {dockLeft.map((item, i) => <DockSlot key={i} item={item} />)}
      <div className="flex justify-center w-[37.5px] shrink-0"><span className="w-[2px] h-[74px] bg-[#555] mt-[6px]" /></div>
      {dockRight.map((item, i) => <DockSlot key={i} item={item} />)}
      <div className="flex justify-center w-[38.5px] shrink-0"><span className="w-[2px] h-[74px] bg-[#555] mt-[6px]" /></div>
      <div className="flex justify-center w-[83px] shrink-0">
        <div className="relative w-[56px] h-[68px] bg-[#f2f2f2] rounded-[3px] pt-[4px] pl-[4px] pr-[12px] flex flex-col gap-[2px] mt-[4px]">
          {[0, 1, 2, 3, 4, 5, 6].map((i) => <span key={i} className="block h-[2px] w-full bg-[#bbb]" />)}
          <span className="absolute bottom-[3px] left-0 w-full text-center text-[18px] text-[#777]">CSV</span>
        </div>
      </div>
      <Thumb bg="bg-[#1c1c1e]" w="w-[76px]" h="h-[50px]" dark badge={miniPrism} />
      <Thumb bg="bg-[#fafafa]" w="w-[73px]" h="h-[44px]" badge={miniChrome} />
      <Thumb bg="bg-[#fafafa]" w="w-[71px]" h="h-[50px]" badge={miniWord} />
      <Thumb bg="bg-[#141416] border-2 border-[#d8d8d8]" w="w-[80px]" h="h-[52px]" dark />
      <Thumb bg="bg-[#14102a]" w="w-[74px]" h="h-[44px]" dark badge={miniSafari} />
      <Thumb bg="bg-[#f6f5ef]" w="w-[74px]" h="h-[44px]" badge={miniSafari} />
      <Thumb bg="bg-[#fafafa]" w="w-[74px]" h="h-[44px]" badge={miniChrome} />
      <div className="flex justify-center w-[83px] shrink-0">
        <svg viewBox="0 0 56 74" className="w-[56px] h-[74px]">
          <path d="M2 14 L8 70 Q28 78 48 70 L54 14Z" fill="#77787a" />
          <path d="M14 20 L18 68 M28 20 V70 M42 20 L38 68" stroke="#99999b" strokeWidth="2" />
          <path d="M2 14 L10 4 L18 10 L27 0 L36 10 L46 3 L54 14 Q28 26 2 14Z" fill="#d8d8da" />
        </svg>
      </div>
    </div>
  );
}

/* ---------- page ---------- */
export default function App() {
  return (
    <div className="relative w-[3456px] h-[2234px] overflow-hidden bg-[#141412] flex flex-col">
      <MenuBar />
      <div className="h-[4px] bg-[#2c2c22] shrink-0" />

      {/* whatever app sits behind the window */}
      <div className="absolute left-0 top-[2090px] w-[441px] h-[144px] bg-[#1b1b19] border-r-2 border-[#050505]" />
      <div className="absolute left-[1002px] top-[2090px] w-[2px] h-[144px] bg-[#050505]" />
      <span className="absolute left-[513px] top-[2073px] text-[28px] font-bold text-[#5c5c5c] font-['Liberation_Sans',sans-serif]">Streetseen</span>
      <span className="absolute left-[513px] top-[2102px] text-[26px] text-[#5c5c5c] font-['Liberation_Sans',sans-serif] whitespace-nowrap">8/31/25&nbsp;&nbsp;2124736200</span>
      <span className="absolute left-[513px] top-[2216px] text-[26px] text-[#6a6a6a] font-['Liberation_Sans',sans-serif] whitespace-nowrap">8/29/25&nbsp;&nbsp;Save it</span>

      <div className="relative ml-[8px] w-[3446px] h-[2010px] rounded-[22px] overflow-hidden shadow-[0_0_0_2px_#555555] flex flex-col shrink-0">
        <Toolbar />
        <TabBar />
        <main className={`${app} relative flex-1 bg-[#0f1116] text-[#fafafa] pl-[158px] pr-[170px] pt-[110px]`}>
          <div className="absolute right-[48px] top-[36px] flex items-center h-[46px]">
            <MdDirectionsRun className="w-[50px] h-[50px] text-[#808080]" />
            <span className="ml-[34px] text-[28px] tracking-[-0.4px]">Stop</span>
            <EllipsisVertical className="w-[28px] h-[28px] ml-[51px]" strokeWidth={2.5} />
          </div>

          <p className="text-[32px] leading-[44px] font-bold tracking-[-0.85px]">First 5 rows:</p>
          <DataTable />

          <h2 className="flex items-center mt-[67px] h-[70px] text-[56px] font-bold tracking-[-1.3px]">
            <GearEmoji />
            <span className="ml-[10px]">Processing Options</span>
          </h2>

          <div className="grid grid-cols-2 gap-x-[32px] mt-[54px]">
            <div>
              <CheckRow label="Enable LLM for ambiguous cases" emoji={<RobotEmoji />} tight />
              <div className="flex items-center justify-between h-[40px] mt-[43px] text-[28px] tracking-[-0.6px]">
                <span>Confidence Threshold</span>
                <Help className="-mr-[3px]" />
              </div>
              <Slider />
              <CheckRow on label="Exclude role accounts" className="mt-[63px]" />
            </div>
            <div>
              <CheckRow on label="Provider-aware de-duplication" />
              <CheckRow on label="Export detailed reports" className="mt-[48px]" />
            </div>
          </div>

          <button className="flex items-center justify-center w-full h-[80px] mt-[40px] rounded-[16px] bg-[#ef5a56] text-[32px] tracking-[-0.77px] text-white">
            <RocketEmoji />
            Process Email Data
          </button>

          <div className="h-[16px] mt-[48px] rounded-full bg-[#262730] overflow-hidden">
            <div className="h-full w-[2805px] rounded-full bg-[#3d7fdb]" />
          </div>

          <p className="mt-[36px] text-[32px] leading-[44px] tracking-[-0.68px]">Status: De-duplicating records...</p>

          <div className="grid grid-cols-4 gap-x-[32px] mt-[42px]">
            {metrics.map((m) => (
              <div key={m.label}>
                <div className="flex items-center gap-[9px] h-[40px] text-[26.5px] tracking-[-0.2px]">
                  {m.icon}
                  <span>{m.label}</span>
                </div>
                <div className="mt-[9px] text-[66px] leading-[80px] tracking-[-3px]">{m.value}</div>
              </div>
            ))}
          </div>

          <div className="absolute right-[2px] top-[964px] w-[9px] bottom-[8px] rounded-full bg-[#6c6c6c]" />
        </main>
      </div>

      <Dock />
    </div>
  );
}
